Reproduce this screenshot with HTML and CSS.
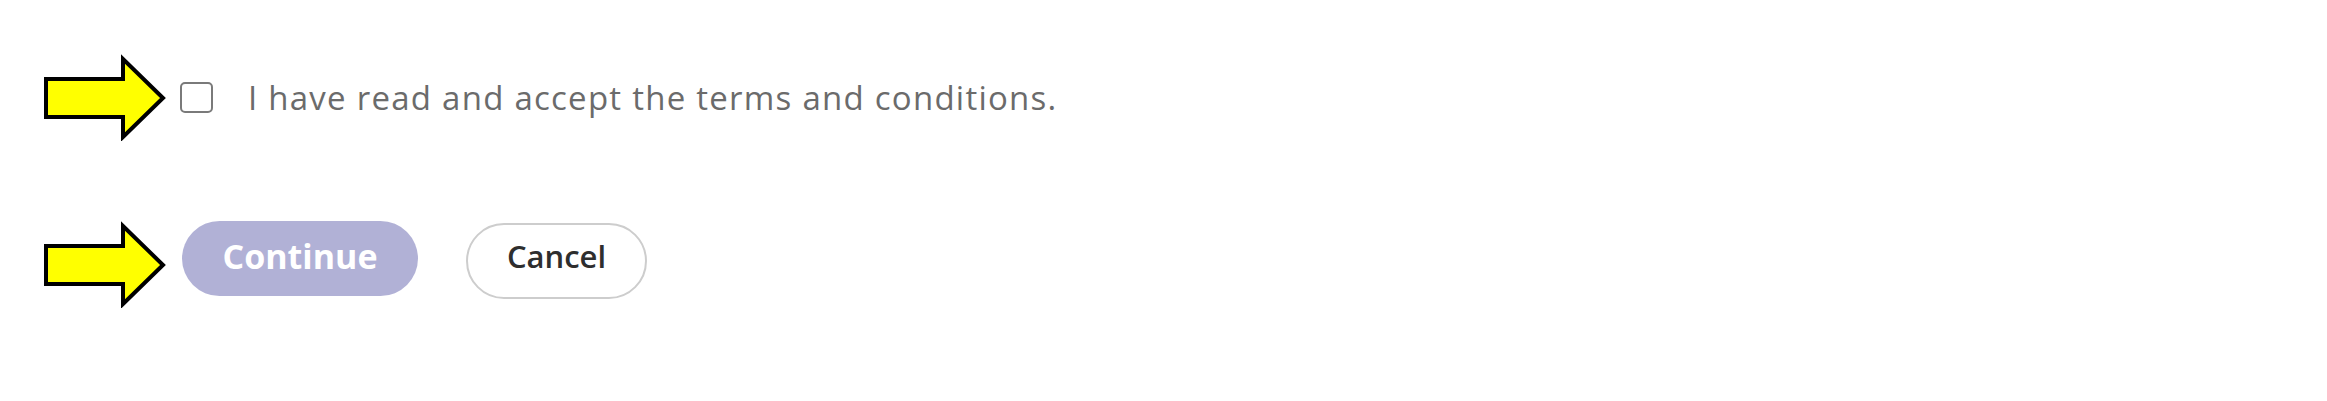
FILE: index.html
```html
<!DOCTYPE html>
<html lang="en">
<head>
<meta charset="utf-8">
<title>Terms</title>
<link rel="stylesheet" href="styles.css">
</head>
<body>
<main class="page">
  <div class="row row-terms">
    <svg class="arrow" width="126" height="87" viewBox="0 0 126 87" aria-hidden="true">
      <polygon points="4,25 81,25 81,5 121,44 81,83 81,63 4,63" fill="#ffff00" stroke="#000" stroke-width="4" stroke-linejoin="miter"/>
    </svg>
    <label class="terms">
      <input type="checkbox" class="check">
      <span class="terms-text">I have read and accept the terms and conditions.</span>
    </label>
  </div>
  <div class="row row-actions">
    <svg class="arrow" width="126" height="87" viewBox="0 0 126 87" aria-hidden="true">
      <polygon points="4,25 81,25 81,5 121,44 81,83 81,63 4,63" fill="#ffff00" stroke="#000" stroke-width="4" stroke-linejoin="miter"/>
    </svg>
    <div class="actions">
      <button class="btn btn-primary" type="button">Continue</button>
      <button class="btn btn-cancel" type="button">Cancel</button>
    </div>
  </div>
</main>
</body>
</html>
```

FILE: styles.css
```css
html, body {
  margin: 0;
  padding: 0;
  background: #ffffff;
}

body {
  font-family: "Open Sans", "Liberation Sans", sans-serif;
}

.page {
  padding: 54px 0 0 42px;
}

.row {
  display: flex;
}

.row-terms {
  align-items: center;
}

.row-actions {
  margin-top: 80px;
  align-items: flex-start;
}

.arrow {
  display: block;
  flex: none;
}

.terms {
  display: flex;
  align-items: center;
  margin-left: 12px;
}

.check {
  appearance: none;
  -webkit-appearance: none;
  margin: 0;
  width: 33px;
  height: 31px;
  box-sizing: border-box;
  border: 2.5px solid #7a7a7a;
  border-radius: 5px;
  background: #fff;
}

.terms-text {
  margin-left: 35px;
  font-size: 33px;
  letter-spacing: 1.25px;
  color: #6b6b6b;
  line-height: 1;
}

.actions {
  display: flex;
  align-items: flex-start;
  margin-left: 14px;
}

.btn {
  font-family: "Open Sans", "Liberation Sans", sans-serif;
  border-radius: 40px;
  cursor: pointer;
  padding: 0;
  box-sizing: border-box;
}

.btn-primary {
  width: 236px;
  height: 75px;
  padding-bottom: 5px;
  border: none;
  background: #b1b1d6;
  color: #ffffff;
  font-size: 34px;
  font-weight: 700;
}

.btn-cancel {
  margin-left: 48px;
  margin-top: 2px;
  width: 181px;
  height: 76px;
  padding-bottom: 11px;
  border: 2px solid #cdcdcd;
  background: #ffffff;
  color: #2e2e2e;
  font-size: 31px;
  font-weight: 600;
}
```
